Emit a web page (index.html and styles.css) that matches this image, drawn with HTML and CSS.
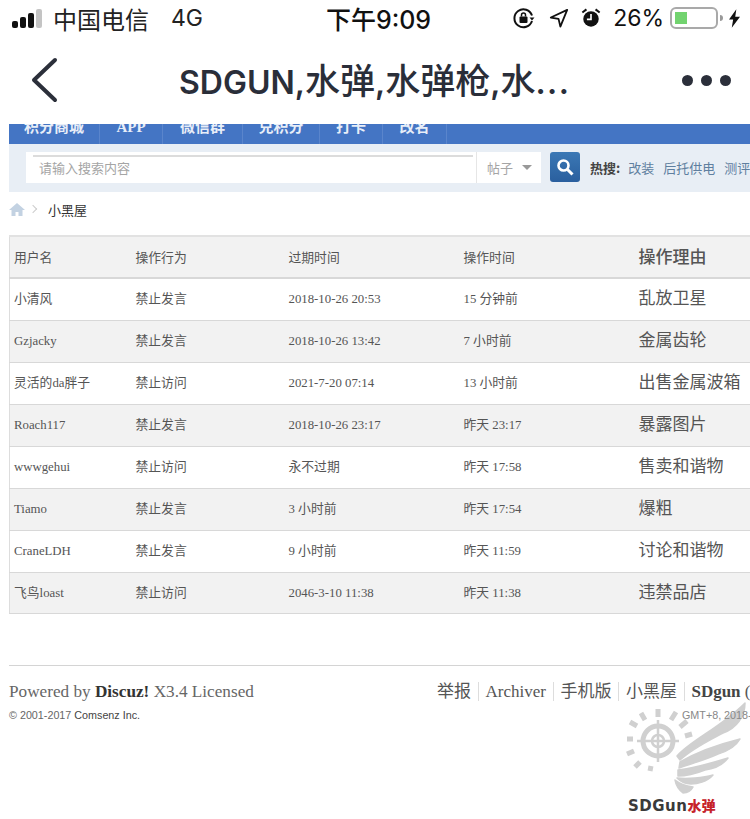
FILE: index.html
```html
<!DOCTYPE html>
<html lang="zh-CN">
<head>
    <meta charset="UTF-8">
    <meta name="viewport" content="width=device-width, initial-scale=1.0">
    <title>SDGUN 小黑屋</title>
    <link rel="stylesheet" href="styles.css">
</head>
<body>
    <div class="phone">
        <div class="status-bar">
            <div class="status-left">
                <div class="signal"><i class="s1"></i><i class="s2"></i><i class="s3"></i><i class="s4"></i></div>
                <span class="carrier">中国电信</span>
                <span class="network">4G</span>
            </div>
            <div class="status-time">下午9:09</div>
            <div class="status-right">
                <svg class="ic-lock" width="24" height="24" viewBox="0 0 24 24">
                    <path d="M20 9.500A9 9 0 1 0 20 15" fill="none" stroke="#111" stroke-width="2"/>
                    <path d="M17.500 11.500h5l-2.500 3z" fill="#111"/>
                    <rect x="7.500" y="10.500" width="8" height="6.500" rx="1" fill="#111"/>
                    <path d="M9.500 10.500V9a2 2 0 0 1 4 0v1.500" fill="none" stroke="#111" stroke-width="1.500"/>
                </svg>
                <svg class="ic-loc" width="20" height="20" viewBox="0 0 22 22">
                    <path d="M20 2 2 10.500l8.500 1.500 2 8.500z" fill="none" stroke="#111" stroke-width="2" stroke-linejoin="round"/>
                </svg>
                <svg class="ic-alarm" width="20" height="22" viewBox="0 0 22 24">
                    <circle cx="11" cy="13" r="8.500" fill="#111"/>
                    <path d="M11 7.500V13.500H6.500" fill="none" stroke="#fff" stroke-width="1.800"/>
                    <path d="M1.500 6 6 2.500M20.500 6 16 2.500" stroke="#111" stroke-width="2.200"/>
                </svg>
                <span class="percent">26%</span>
                <div class="battery"><div class="battery-fill"></div></div>
                <div class="battery-cap"></div>
                <svg class="ic-bolt" width="11" height="19" viewBox="0 0 12 20">
                    <path d="M8 0 0 11h4.500L3 20l9-12H6.800z" fill="#111"/>
                </svg>
            </div>
        </div>

        <div class="nav-bar">
            <svg class="back" width="28" height="46" viewBox="0 0 28 46">
                <path d="M25 3 4 23l21 20" fill="none" stroke="#2b2f3a" stroke-width="4" stroke-linecap="round" stroke-linejoin="round"/>
            </svg>
            <div class="nav-title">SDGUN,<span>水弹</span>,<span>水弹枪</span>,<span>水</span><em>...</em></div>
            <div class="dots"><i></i><i></i><i></i></div>
        </div>

        <div class="page">
            <div class="menu">
                <a class="menu-item w-first">积分商城</a>
                <a class="menu-item w-app">APP</a>
                <a class="menu-item w-wx">微信群</a>
                <a class="menu-item w-dh">兑积分</a>
                <a class="menu-item w-dk">打卡</a>
                <a class="menu-item w-gm">改名</a>
            </div>

            <div class="search-band">
                <div class="search-box">
                    <div class="search-input">请输入搜索内容</div>
                    <div class="search-type">帖子<span class="caret"></span></div>
                </div>
                <div class="search-btn">
                    <svg width="18" height="18" viewBox="0 0 18 18">
                        <circle cx="7.500" cy="7.500" r="5" fill="none" stroke="#fff" stroke-width="2.600"/>
                        <path d="m11.500 11.500 5 5" stroke="#fff" stroke-width="3"/>
                    </svg>
                </div>
                <div class="hot">
                    <strong>热搜:</strong>
                    <a>改装</a><a>后托供电</a><a>测评</a>
                </div>
            </div>

            <div class="crumbs">
                <svg class="home" width="16" height="13" viewBox="0 0 16 13">
                    <path d="M8 0 0 7h2.500v6h4V9h3v4h4V7H16z" fill="#c3d2e2"/>
                </svg>
                <span class="crumb-sep"></span>
                <span>小黑屋</span>
            </div>

            <table class="ban-table">
                <colgroup>
                    <col class="c1"><col class="c2"><col class="c3"><col class="c4"><col class="c5">
                </colgroup>
                <tr class="head">
                    <td>用户名</td><td>操作行为</td><td>过期时间</td><td>操作时间</td><td class="reason">操作理由</td>
                </tr>
                <tr>
                    <td>小清风</td><td>禁止发言</td><td>2018-10-26 20:53</td><td>15 分钟前</td><td class="reason">乱放卫星</td>
                </tr>
                <tr class="alt">
                    <td>Gzjacky</td><td>禁止发言</td><td>2018-10-26 13:42</td><td>7 小时前</td><td class="reason">金属齿轮</td>
                </tr>
                <tr>
                    <td>灵活的da胖子</td><td>禁止访问</td><td>2021-7-20 07:14</td><td>13 小时前</td><td class="reason">出售金属波箱</td>
                </tr>
                <tr class="alt">
                    <td>Roach117</td><td>禁止发言</td><td>2018-10-26 23:17</td><td>昨天 23:17</td><td class="reason">暴露图片</td>
                </tr>
                <tr>
                    <td>wwwgehui</td><td>禁止访问</td><td>永不过期</td><td>昨天 17:58</td><td class="reason">售卖和谐物</td>
                </tr>
                <tr class="alt">
                    <td>Tiamo</td><td>禁止发言</td><td>3 小时前</td><td>昨天 17:54</td><td class="reason">爆粗</td>
                </tr>
                <tr>
                    <td>CraneLDH</td><td>禁止发言</td><td>9 小时前</td><td>昨天 11:59</td><td class="reason">讨论和谐物</td>
                </tr>
                <tr class="alt last">
                    <td>飞鸟loast</td><td>禁止访问</td><td>2046-3-10 11:38</td><td>昨天 11:38</td><td class="reason">违禁品店</td>
                </tr>
            </table>

            <div class="footer">
                <div class="foot-row">
                    <div class="powered">Powered by <strong>Discuz!</strong> X3.4 Licensed</div>
                    <div class="foot-links">
                        <a>举报</a><a>Archiver</a><a>手机版</a><a>小黑屋</a><a><strong>SDgun</strong> (</a>
                    </div>
                </div>
                <div class="foot-row small">
                    <div>© 2001-2017 <span class="dark">Comsenz Inc.</span></div>
                    <div class="gmt">GMT+8, 2018-</div>
                </div>
            </div>
        </div>

        <div class="watermark">
            <svg width="125" height="96" viewBox="0 0 125 96">
                <g fill="none" stroke="#d0d0d0">
                    <circle cx="33" cy="41" r="15" stroke-width="5"/>
                    <circle cx="33" cy="41" r="6" stroke-width="2.500"/>
                    <path d="M33 20v42M12 41h42" stroke-width="2.500"/>
                    <path d="M33 17V9M20 20l-4-7M46 20l5-8M55 27l7-6M60 36l7-2M12 26l-7-4M8 39H2M9 51l-7 3M15 62l-5 5M26 66l-1 5" stroke-width="5"/>
                </g>
                <g fill="#d0d0d0" stroke="#d0d0d0" stroke-width="1.500" stroke-linejoin="round">
                    <path d="M52 56C66 40 95 28 120 3c0 13-8 25-22 30-13 7-30 15-43 27z"/>
                    <path d="M55 62c17-10 40-18 60-23-5 9-15 13-22 15-13 6-28 10-39 14z"/>
                    <path d="M53 70c17-2 37-8 50-12-6 8-15 11-23 12-10 4-20 6-27 6z"/>
                    <path d="M52 78c10 1 26 0 36-3-6 7-16 9-22 9-6 0-10-2-14-6z"/>
                    <path d="M50 80c5 4 12 6 18 7-2 4-6 6-10 6-4-3-7-7-8-13z"/>
                </g>
            </svg>
            <div class="wm-text">SDGun<span>水弹</span></div>
        </div>
    </div>
</body>
</html>
```

FILE: styles.css
```css
* {
    box-sizing: border-box;
}
html, body {
    margin: 0;
    padding: 0;
    background: #fff;
}
.phone {
    position: relative;
    width: 750px;
    height: 819px;
    overflow: hidden;
    font-family: "Liberation Serif", "Noto Sans CJK SC", serif;
    color: #444;
}

/* status bar */
.status-bar {
    display: grid;
    grid-template-columns: 1fr auto 1fr;
    align-items: center;
    height: 32px;
    padding: 0 10px 0 12px;
    font-family: "Inter", "Noto Sans CJK SC", sans-serif;
    color: #111;
}
.status-left {
    display: flex;
    align-items: center;
}
.signal {
    display: flex;
    align-items: flex-end;
    gap: 2px;
    width: 41px;
}
.signal i {
    display: block;
    width: 6px;
    border-radius: 2px;
    background: #111;
}
.signal .s1 { height: 7px; }
.signal .s2 { height: 11px; }
.signal .s3 { height: 15px; }
.signal .s4 { height: 19px; background: #c4c4c4; }
.carrier {
    font-size: 24px;
    color: #222;
}
.network {
    font-size: 23px;
    margin-left: 22px;
    color: #222;
}
.status-time {
    font-size: 25px;
    font-weight: 500;
    margin-left: 5px;
}
.status-right {
    display: flex;
    align-items: center;
    justify-content: flex-end;
}
.ic-loc { margin-left: 13px; }
.ic-alarm { margin-left: 12px; }
.percent {
    font-size: 23px;
    margin-left: 12px;
}
.battery {
    width: 48px;
    height: 22px;
    margin-left: 6px;
    padding: 3px;
    border: 2px solid #a9a9a9;
    border-radius: 6px;
}
.battery-fill {
    width: 12px;
    height: 100%;
    background: #72d36f;
}
.battery-cap {
    width: 3px;
    height: 6px;
    margin-left: 2px;
    background: #999;
    border-radius: 0 3px 3px 0;
}
.ic-bolt { margin-left: 6px; }

/* app nav */
.nav-bar {
    display: flex;
    align-items: center;
    height: 92px;
    padding: 4px 19px 0 30px;
}
.back {
    flex: none;
}
.nav-title {
    flex: 1;
    margin: 0 0 3px 121px;
    font-family: "Inter", "Noto Sans CJK SC", sans-serif;
    font-size: 32px;
    font-weight: 600;
    color: #2a2e39;
    white-space: nowrap;
}
.nav-title span {
    font-size: 35px;
    font-weight: 500;
}
.nav-title em {
    font-style: normal;
    letter-spacing: 1.500px;
}
.dots {
    display: flex;
    gap: 8px;
}
.dots i {
    display: block;
    width: 11px;
    height: 11px;
    border-radius: 50%;
    background: #2b2f3a;
}

/* forum page */
.menu {
    display: flex;
    height: 20px;
    margin-left: 9px;
    overflow: hidden;
    background: #4475c4;
}
.menu-item {
    display: block;
    height: 27px;
    margin-top: -7px;
    line-height: 20px;
    font-size: 15px;
    font-weight: 700;
    color: #e8eef8;
    text-align: center;
    border-right: 1px solid #5a85cc;
}
.w-first { width: 91px; }
.w-app { width: 63px; }
.w-wx { width: 80px; }
.w-dh { width: 77px; }
.w-dk { width: 63px; }
.w-gm { width: 64px; }

.search-band {
    display: flex;
    align-items: center;
    height: 48px;
    margin-left: 9px;
    padding: 0 0 2px 17px;
    background: #e8eef5;
    white-space: nowrap;
    overflow: hidden;
}
.search-box {
    display: flex;
    flex: none;
    width: 515px;
    height: 31px;
    background: #fff;
}
.search-input {
    width: 450px;
    padding-left: 13px;
    line-height: 31px;
    font-size: 13px;
    color: #a5a5a5;
    font-family: "Noto Sans CJK SC", sans-serif;
    background: linear-gradient(#dcdcdc, #dcdcdc) no-repeat 7px 3px / 440px 2px;
}
.search-type {
    display: flex;
    align-items: center;
    width: 65px;
    padding-left: 10px;
    border-left: 1px solid #e6e6e6;
    font-size: 13px;
    color: #a5a5a5;
    font-family: "Noto Sans CJK SC", sans-serif;
}
.caret {
    width: 0;
    height: 0;
    margin-left: 9px;
    border-style: solid;
    border-width: 5px 5px 0;
    border-color: #999 transparent transparent;
}
.search-btn {
    display: flex;
    flex: none;
    align-items: center;
    justify-content: center;
    width: 30px;
    height: 30px;
    margin-left: 9px;
    border-radius: 3px;
    background: linear-gradient(#3b78b5, #2a5f9e);
}
.hot {
    margin-left: 10px;
    font-size: 13px;
    font-family: "Noto Sans CJK SC", sans-serif;
}
.hot strong {
    color: #444;
}
.hot a {
    margin-left: 9px;
    color: #5f7f9f;
}
.hot strong + a {
    margin-left: 5px;
}

.crumbs {
    display: flex;
    align-items: center;
    height: 43px;
    padding: 0 0 9px 9px;
    font-size: 13px;
    color: #333;
    font-family: "Noto Sans CJK SC", sans-serif;
}
.crumb-sep {
    width: 6px;
    height: 6px;
    margin: 0 12px 0 5px;
    border-top: 1px solid #ccc;
    border-right: 1px solid #ccc;
    transform: rotate(45deg);
}

.ban-table {
    width: 741px;
    margin-left: 9px;
    border-collapse: collapse;
    table-layout: fixed;
    border-left: 1px solid #ddd;
    font-size: 12.800px;
}
.c1 { width: 122px; }
.c2 { width: 153px; }
.c3 { width: 175px; }
.c4 { width: 175px; }
.c5 { width: 116px; }
.ban-table tr {
    height: 42px;
    border-bottom: 1px solid #d8d8d8;
}
.ban-table .last {
    height: 41px;
}
.ban-table td {
    padding: 0 0 0 4px;
    line-height: 16px;
    white-space: nowrap;
    overflow: hidden;
    color: #555;
}
.ban-table .head td {
    padding-top: 1px;
}
.ban-table .head {
    background: #f2f2f2;
    border-top: 2px solid #e2e2e2;
    border-bottom: 2px solid #d8d8d8;
}
.ban-table .alt {
    background: #f2f2f2;
}
.ban-table .reason {
    font-size: 17px;
    line-height: 20px;
    color: #555;
}
.head .reason {
    font-weight: 500;
}

.footer {
    position: relative;
    z-index: 1;
    margin: 51px 0 0 9px;
    border-top: 1px solid #d4d4d4;
    padding-top: 16px;
    white-space: nowrap;
}
.foot-row {
    display: flex;
    justify-content: space-between;
    font-size: 17px;
    line-height: 20px;
    color: #666;
}
.powered {
    font-size: 17.200px;
}
.powered strong {
    color: #333;
}
.foot-links {
    width: 313px;
    overflow: hidden;
    color: #555;
}
.foot-links a {
    padding: 0 7px 0 6.500px;
    border-left: 1px solid #ddd;
}
.foot-links a:first-child {
    padding-left: 0;
    border-left: 0;
}
.foot-links strong {
    color: #444;
}
.foot-row.small {
    margin-top: 5px;
    font-size: 10.750px;
    line-height: 16px;
    font-family: "Liberation Sans", sans-serif;
    color: #666;
}
.dark {
    color: #444;
}
.gmt {
    width: 68px;
    overflow: hidden;
    color: #888;
}

/* logo laid over the page corner */
.watermark {
    position: absolute;
    left: 625px;
    top: 700px;
    width: 125px;
}
.watermark svg {
    display: block;
}
.wm-text {
    padding-left: 3px;
    font-family: "DejaVu Sans", "Noto Sans CJK SC", sans-serif;
    font-size: 15px;
    line-height: 20px;
    font-weight: 700;
    color: #3a3a3a;
    letter-spacing: 0.500px;
    white-space: nowrap;
}
.wm-text span {
    font-size: 14px;
    letter-spacing: 0;
    font-weight: 900;
    color: #c6222a;
}
```
